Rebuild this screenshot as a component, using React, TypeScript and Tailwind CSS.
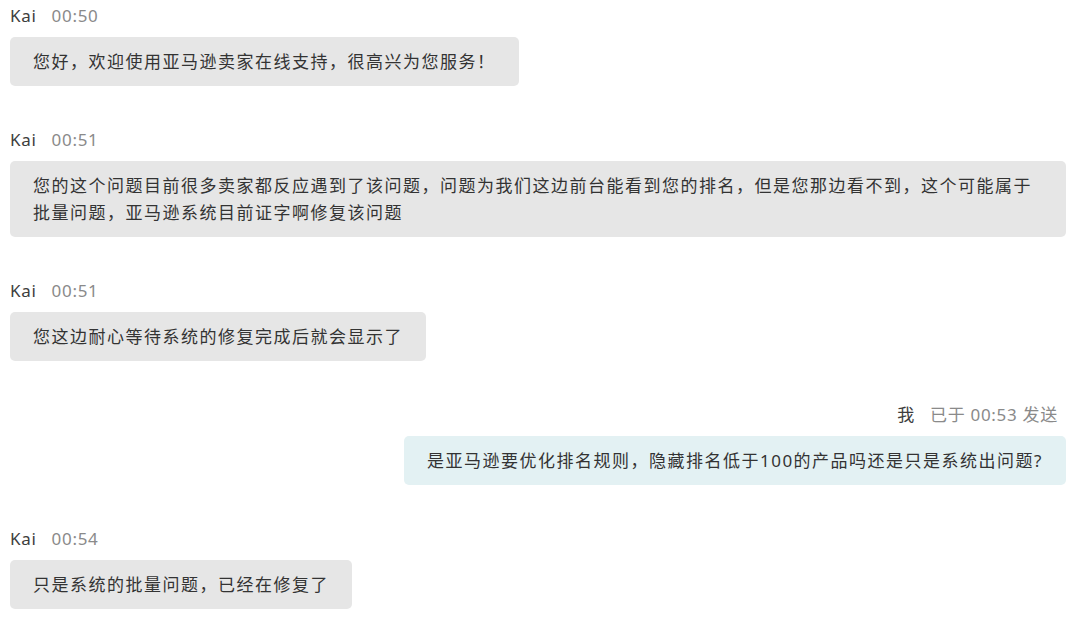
import React from "react";

interface IMessage {
  id: number;
  sender: "agent" | "me";
  name: string;
  time: string;
  text: string;
}

const messages: IMessage[] = [
  {
    id: 1,
    sender: "agent",
    name: "Kai",
    time: "00:50",
    text: "您好，欢迎使用亚马逊卖家在线支持，很高兴为您服务！",
  },
  {
    id: 2,
    sender: "agent",
    name: "Kai",
    time: "00:51",
    text: "您的这个问题目前很多卖家都反应遇到了该问题，问题为我们这边前台能看到您的排名，但是您那边看不到，这个可能属于批量问题，亚马逊系统目前证字啊修复该问题",
  },
  {
    id: 3,
    sender: "agent",
    name: "Kai",
    time: "00:51",
    text: "您这边耐心等待系统的修复完成后就会显示了",
  },
  {
    id: 4,
    sender: "me",
    name: "我",
    time: "已于 00:53 发送",
    text: "是亚马逊要优化排名规则，隐藏排名低于100的产品吗还是只是系统出问题?",
  },
  {
    id: 5,
    sender: "agent",
    name: "Kai",
    time: "00:54",
    text: "只是系统的批量问题，已经在修复了",
  },
];

const font = "font-['Noto_Sans','Noto_Sans_CJK_SC',sans-serif]";

const MessageBlock = ({ msg }: { msg: IMessage }) => {
  const mine = msg.sender === "me";

  return (
    <div className={`flex flex-col mb-[43px] ${mine ? "items-end" : "items-start"}`}>
      <div className={`flex items-center h-[22px] text-[17px] tracking-[0.7px] ${mine ? "pr-2" : ""}`}>
        <span className="text-[#3d3d3d]">{msg.name}</span>
        <span className="ml-[15px] text-[#8a8a8a]">{msg.time}</span>
      </div>
      <div
        className={`mt-[10px] max-w-full rounded-[5px] px-[23px] py-[11px] text-[17px] leading-[27px] tracking-[1.5px] text-[#333] ${
          mine ? "bg-[#e3f1f3]" : "bg-[#e6e6e6]"
        }`}
      >
        {msg.text}
      </div>
    </div>
  );
};

const App = () => {
  return (
    <div className={`min-h-[626px] bg-white pl-[10px] pr-[14px] pt-[5px] ${font}`}>
      {messages.map((msg) => (
        <MessageBlock key={msg.id} msg={msg} />
      ))}
    </div>
  );
};

export default App;
